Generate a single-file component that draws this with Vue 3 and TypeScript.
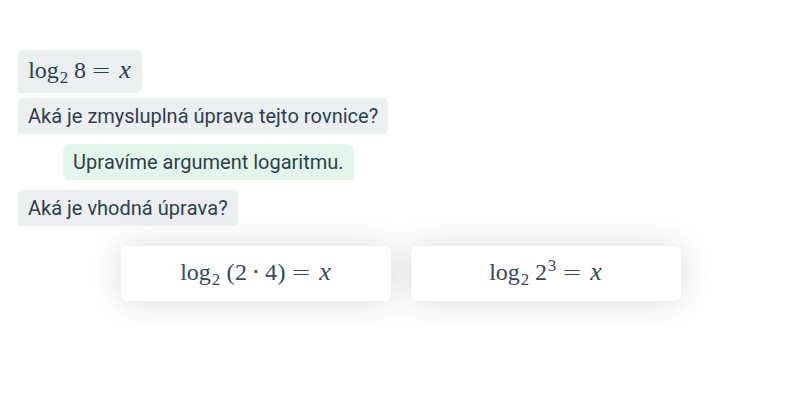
<script setup lang="ts">
type TokenKind = 'fn' | 'num' | 'sub' | 'sup' | 'open' | 'close' | 'dot' | 'rel' | 'var'

interface Token {
  kind: TokenKind
  text: string
}

interface Message {
  from: 'tutor' | 'student'
  text?: string
  math?: Token[]
}

const log2: Token[] = [
  { kind: 'fn', text: 'log' },
  { kind: 'sub', text: '2' },
]

const equalsX: Token[] = [
  { kind: 'rel', text: '=' },
  { kind: 'var', text: 'x' },
]

const messages: Message[] = [
  { from: 'tutor', math: [...log2, { kind: 'num', text: '8' }, ...equalsX] },
  { from: 'tutor', text: 'Aká je zmysluplná úprava tejto rovnice?' },
  { from: 'student', text: 'Upravíme argument logaritmu.' },
  { from: 'tutor', text: 'Aká je vhodná úprava?' },
]

const answers: Token[][] = [
  [
    ...log2,
    { kind: 'open', text: '(' },
    { kind: 'num', text: '2' },
    { kind: 'dot', text: '⋅' },
    { kind: 'num', text: '4' },
    { kind: 'close', text: ')' },
    ...equalsX,
  ],
  [...log2, { kind: 'num', text: '2' }, { kind: 'sup', text: '3' }, ...equalsX],
]
</script>

<template>
  <main class="dialog">
    <section class="messages">
      <p
        v-for="(message, i) in messages"
        :key="i"
        class="bubble"
        :class="[message.from, { formula: message.math }]"
      >
        <span v-if="message.math" class="math">
          <span v-for="(token, j) in message.math" :key="j" :class="token.kind">{{ token.text }}</span>
        </span>
        <template v-else>{{ message.text }}</template>
      </p>
    </section>
    <section class="answers">
      <button v-for="(answer, i) in answers" :key="i" type="button" class="answer">
        <span class="math">
          <span v-for="(token, j) in answer" :key="j" :class="token.kind">{{ token.text }}</span>
        </span>
      </button>
    </section>
  </main>
</template>

<style>
body {
  background: #fff;
}
</style>

<style scoped>
.dialog {
  padding: 50px 16px 40px 18px;
  font-family: Roboto, "Liberation Sans", sans-serif;
  font-size: 20px;
  line-height: 26px;
  font-kerning: none;
  color: #2c3e50;
}

.messages {
  display: flex;
  flex-direction: column;
  align-items: flex-start;
  gap: 10px;
}

.bubble {
  margin: 0;
  padding: 5px 10px;
  border-radius: 6px;
}

.tutor {
  background: #ebeff0;
  border-bottom-left-radius: 0;
}

.student {
  margin-left: 45px;
  background: #e4f6eb;
  border-radius: 8px;
  border-bottom-right-radius: 0;
}

.formula {
  margin-bottom: -5px;
  padding: 5px 10px 8px;
}

.answers {
  display: flex;
  flex-wrap: wrap;
  justify-content: center;
  gap: 20px;
  margin-top: 20px;
}

.answer {
  width: 270px;
  padding: 11px 10px 14px;
  border: 0;
  border-radius: 6px;
  background: #fff;
  box-shadow: 0 0 32px rgba(0, 0, 0, 0.15);
  color: #34495e;
  font: inherit;
  cursor: pointer;
}

.math {
  display: inline-flex;
  align-items: baseline;
  height: 30px;
  font-family: "Liberation Serif", serif;
  font-size: 24px;
  line-height: 30px;
  vertical-align: top;
}

.math > span {
  text-align: center;
}

.fn {
  width: 31px;
}

.num {
  width: 12px;
}

.sub,
.sup {
  position: relative;
  width: 10px;
  font-size: 17px;
  line-height: 20px;
}

.sub {
  top: 5px;
  margin-right: 5px;
}

.sup {
  top: -9px;
}

.open,
.close {
  width: 9px;
}

.dot {
  width: 8px;
  margin: 0 5px;
}

.rel {
  width: 19px;
  margin: 0 8px 0 5px;
  font-family: "DejaVu Sans", sans-serif;
  font-weight: 200;
  line-height: 24px;
}

.var {
  width: 14px;
  font-size: 26px;
  font-style: italic;
}
</style>
